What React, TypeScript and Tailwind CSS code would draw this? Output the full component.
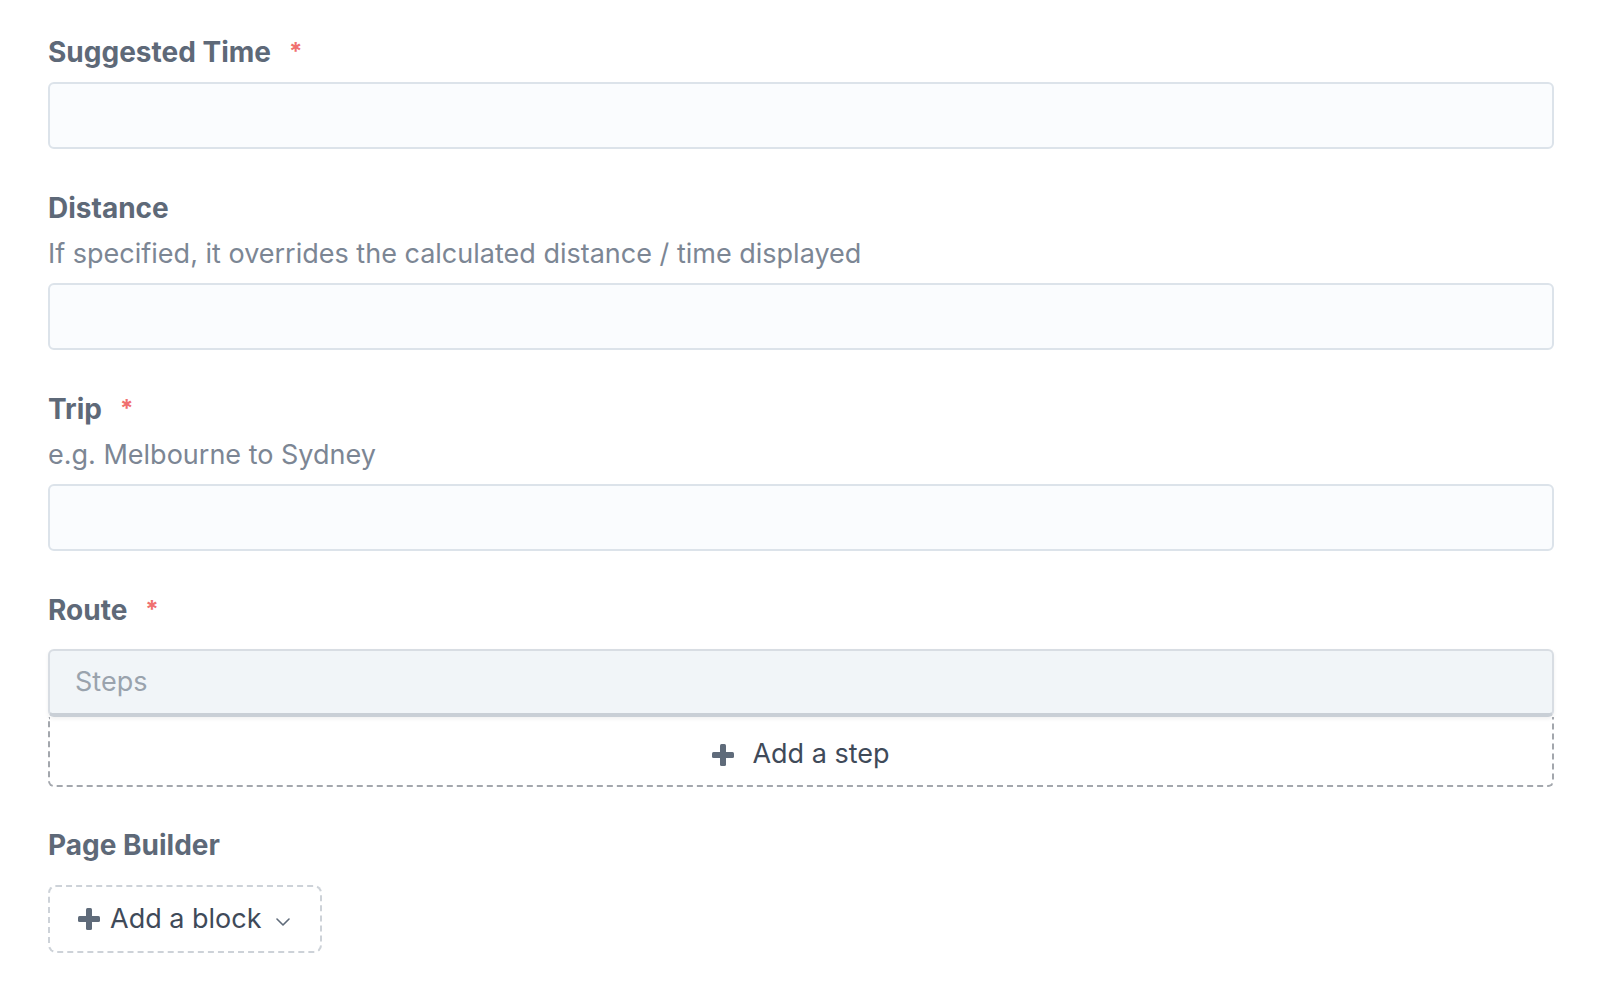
import React from "react";

const font = { fontFamily: "Inter, 'Noto Sans', sans-serif" };

function Required() {
  return <span className="ml-[18px] text-[24px] font-bold text-[#f0706f]">*</span>;
}

function Plus({ className = "" }: { className?: string }) {
  return (
    <svg viewBox="0 0 22 22" className={className} fill="#5f6b7a">
      <rect x="8" y="0" width="6" height="22" rx="1.5" />
      <rect x="0" y="8" width="22" height="6" rx="1.5" />
    </svg>
  );
}

function Field({
  label,
  required,
  help,
}: {
  label: string;
  required?: boolean;
  help?: string;
}) {
  return (
    <div className="mb-[39px]">
      <div className="flex h-[40px] items-center text-[28px] font-bold text-[#5e6978]">
        {label}
        {required && <Required />}
      </div>
      {help && (
        <div className="mt-[6px] flex h-[40px] items-center text-[27px] text-[#7c8694]">
          {help}
        </div>
      )}
      <div className={`${help ? "mt-[9px]" : "mt-[10px]"} h-[67px] rounded-md border-2 border-[#dce3ea] bg-[#fafcfe]`} />
    </div>
  );
}

export default function App() {
  return (
    <div className="min-h-screen bg-white px-12 pt-8" style={font}>
      <Field label="Suggested Time" required />
      <Field
        label="Distance"
        help="If specified, it overrides the calculated distance / time displayed"
      />
      <Field label="Trip" required help="e.g. Melbourne to Sydney" />

      <div className="mb-[38px]">
        <div className="flex h-[40px] items-center text-[28px] font-bold text-[#5e6978]">
          Route
          <Required />
        </div>
        <div className="mt-[19px] flex h-[68px] items-center rounded-md border-2 border-[#d8dde3] border-b-[4px] border-b-[#c9cfd6] bg-[#f1f5f8] pl-[25px] text-[27px] text-[#9aa3ad] shadow-[0_2px_4px_rgba(0,0,0,0.06)]">
          Steps
        </div>
        <div className="flex h-[70px] items-center justify-center gap-[18px] rounded-b-md border-2 border-t-0 border-dashed border-[#a3a7ad] pt-[7px] text-[27px] text-[#3f4a59]">
          <Plus className="h-[22px] w-[22px]" />
          <span>Add a step</span>
        </div>
      </div>

      <div className="flex h-[40px] items-center text-[28px] font-bold text-[#5e6978]">
        Page Builder
      </div>
      <div className="mt-[20px] inline-flex h-[68px] w-[274px] items-center rounded-lg border-2 border-dashed border-[#cdd2d8] pl-[28px] text-[27px] text-[#3f4a59]">
        <Plus className="h-[22px] w-[22px]" />
        <span className="ml-[10px]">Add a block</span>
        <svg viewBox="0 0 14 8" className="ml-[14px] mt-[6px] h-[8px] w-[14px]" fill="none" stroke="#5f6b7a" strokeWidth="1.6" strokeLinecap="round" strokeLinejoin="round">
          <path d="M1 1l6 6 6-6" />
        </svg>
      </div>
    </div>
  );
}
